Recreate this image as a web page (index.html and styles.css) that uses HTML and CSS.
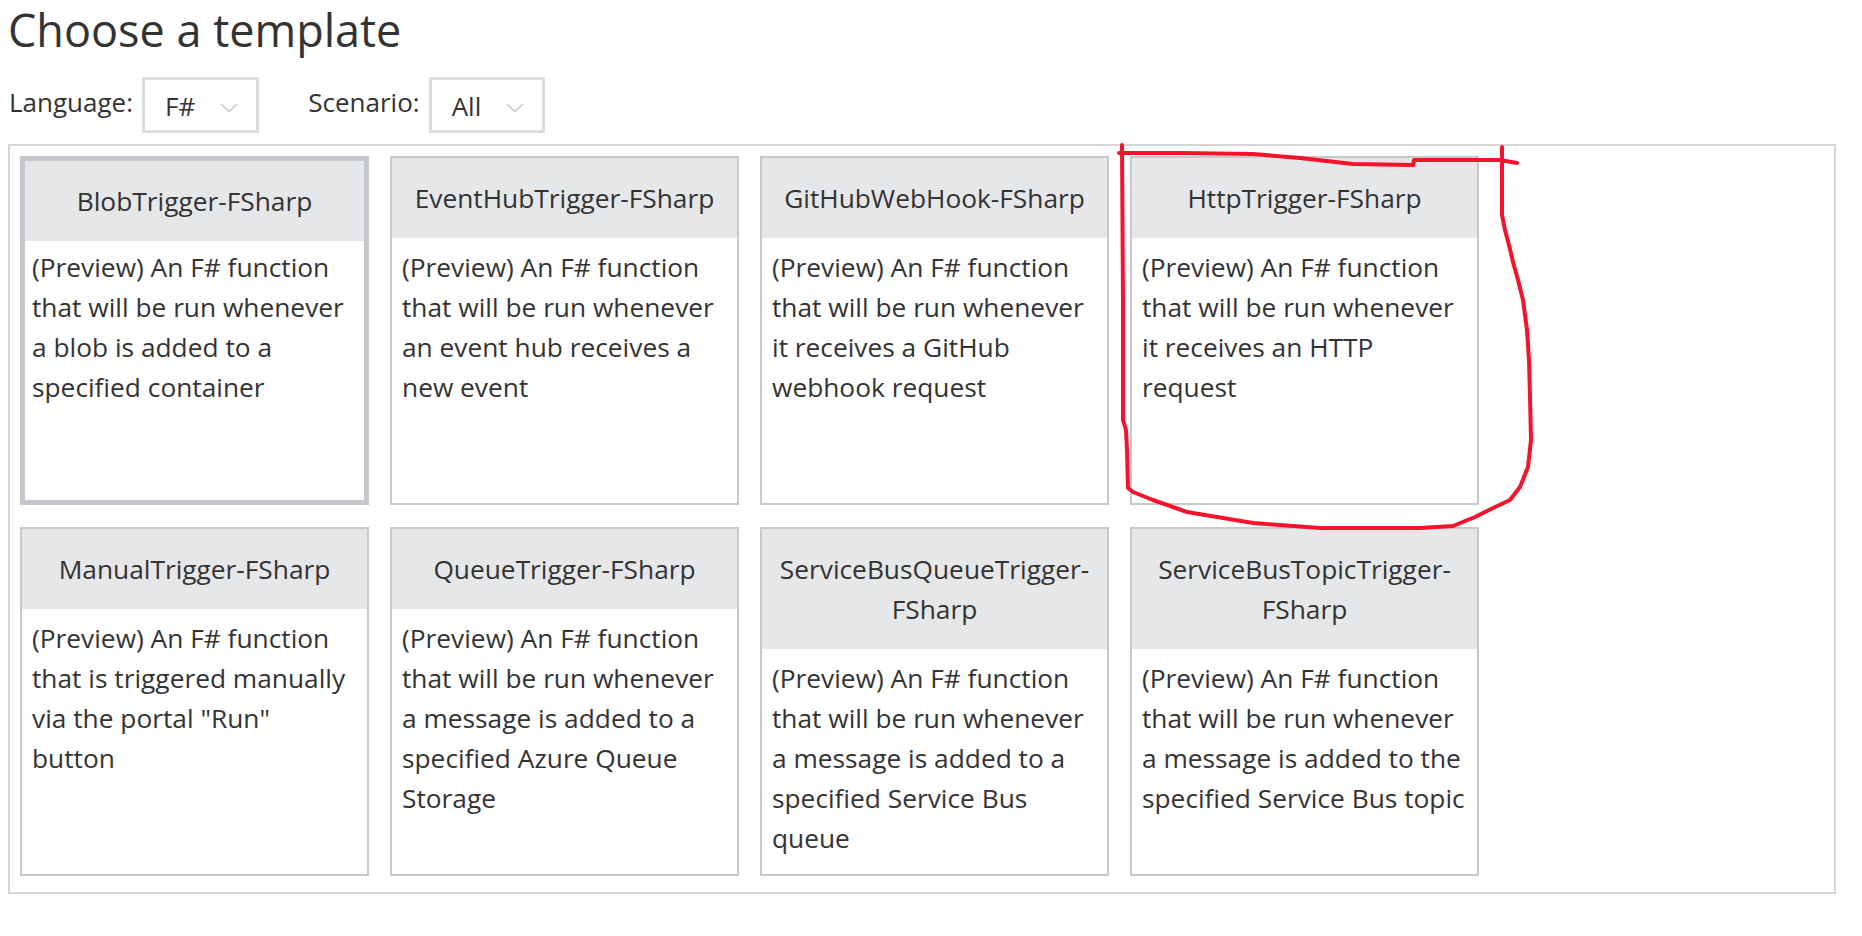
FILE: index.html
```html
<!DOCTYPE html>
<html lang="en">
<head>
    <meta charset="UTF-8">
    <meta name="viewport" content="width=device-width, initial-scale=1.0">
    <title>Choose a template</title>
    <link rel="stylesheet" href="styles.css">
</head>
<body>
<div class="page">
    <h1>Choose a template</h1>

    <div class="filters">
        <div class="filter">
            <label>Language:</label>
            <div class="select">
                <span>F#</span>
                <svg class="chevron" width="18" height="10" viewBox="0 0 18 10"><path d="M1 1 L9 8.5 L17 1" fill="none" stroke="#c9c9c9" stroke-width="1.6"/></svg>
            </div>
        </div>
        <div class="filter filter-scenario">
            <label>Scenario:</label>
            <div class="select">
                <span>All</span>
                <svg class="chevron" width="18" height="10" viewBox="0 0 18 10"><path d="M1 1 L9 8.5 L17 1" fill="none" stroke="#c9c9c9" stroke-width="1.6"/></svg>
            </div>
        </div>
    </div>

    <div class="templates">
        <div class="card selected">
            <div class="card-title">BlobTrigger-FSharp</div>
            <div class="card-text">(Preview) An F# function that will be run whenever a blob is added to a specified container</div>
        </div>
        <div class="card">
            <div class="card-title">EventHubTrigger-FSharp</div>
            <div class="card-text">(Preview) An F# function that will be run whenever an event hub receives a new event</div>
        </div>
        <div class="card">
            <div class="card-title">GitHubWebHook-FSharp</div>
            <div class="card-text">(Preview) An F# function that will be run whenever it receives a GitHub webhook request</div>
        </div>
        <div class="card">
            <div class="card-title">HttpTrigger-FSharp</div>
            <div class="card-text">(Preview) An F# function that will be run whenever it receives an HTTP request</div>
        </div>
        <div class="card">
            <div class="card-title">ManualTrigger-FSharp</div>
            <div class="card-text">(Preview) An F# function that is triggered manually via the portal "Run" button</div>
        </div>
        <div class="card">
            <div class="card-title">QueueTrigger-FSharp</div>
            <div class="card-text">(Preview) An F# function that will be run whenever a message is added to a specified Azure Queue Storage</div>
        </div>
        <div class="card">
            <div class="card-title">ServiceBusQueueTrigger-FSharp</div>
            <div class="card-text">(Preview) An F# function that will be run whenever a message is added to a specified Service Bus queue</div>
        </div>
        <div class="card">
            <div class="card-title">ServiceBusTopicTrigger-FSharp</div>
            <div class="card-text">(Preview) An F# function that will be run whenever a message is added to the specified Service Bus topic</div>
        </div>
    </div>
</div>

<!-- marcado a mano sobre la captura -->
<svg class="scribble" width="1862" height="936" viewBox="0 0 1862 936">
    <path d="M1119 153 L1180 153 L1253 154 L1300 158 L1353 164 L1413 165 L1414 160 L1450 160 L1500 160 L1517 163" />
    <path d="M1502 147 L1502 160 L1502 215 L1505 230 L1509 245 L1513 262 L1518 280 L1523 300 L1527 330 L1529 360 L1530 397 L1531 440 L1528 467 L1520 487 L1510 500 L1493 508 L1475 517 L1453 526 L1420 528 L1320 528 L1253 523 L1187 512 L1153 500 L1133 492 L1128 488 L1127 450 L1126 430 L1123 420 L1123 300 L1122 145" />
</svg>
</body>
</html>
```

FILE: styles.css
```css
body {
    font-family: "Open Sans", "Noto Sans", sans-serif;
    color: #333;
    margin: 0;
    padding: 0 26px 0 8px;
    position: relative;
    background: #fff;
}

h1 {
    font-size: 45px;
    font-weight: normal;
    line-height: 60px;
    margin: 0 0 17px 0;
}

.filters {
    display: flex;
    align-items: center;
    font-size: 26px;
}

.filter {
    display: flex;
    align-items: center;
}

.filter label {
    line-height: 40px;
    margin-left: 1px;
    margin-right: 9px;
    margin-bottom: 6px;
}

.filter-scenario {
    margin-left: 48px;
}

.select {
    display: flex;
    align-items: center;
    height: 56px;
    box-sizing: border-box;
    border: 3px solid #dedede;
    padding: 3px 18px 0 20px;
    line-height: 47px;
}

.chevron {
    margin-left: 25px;
    margin-top: 2px;
}

.templates {
    margin-top: 11px;
    border: 2px solid #d6d6d6;
    padding: 10px 10px 16px 10px;
    display: grid;
    grid-template-columns: repeat(4, 349px);
    grid-auto-rows: 349px;
    gap: 22px 21px;
}

.card {
    box-sizing: border-box;
    border: 2px solid #c8c8c8;
    font-size: 26.3px;
    line-height: 40px;
}

.card-title {
    background-color: #e6e7e9;
    text-align: center;
    padding: 20px 10px;
}

.card-text {
    padding: 9px 9px 0 10px;
}

.card.selected {
    border: 5px solid #c4c7cc;
}

.card.selected .card-title {
    padding: 20px 7px;
}

.card.selected .card-text {
    padding: 6px 6px 0 7px;
}

.scribble {
    position: absolute;
    top: 0;
    left: 0;
    pointer-events: none;
}

.scribble path {
    fill: none;
    stroke: #f5132b;
    stroke-width: 4;
    stroke-linejoin: round;
    stroke-linecap: round;
}
```
